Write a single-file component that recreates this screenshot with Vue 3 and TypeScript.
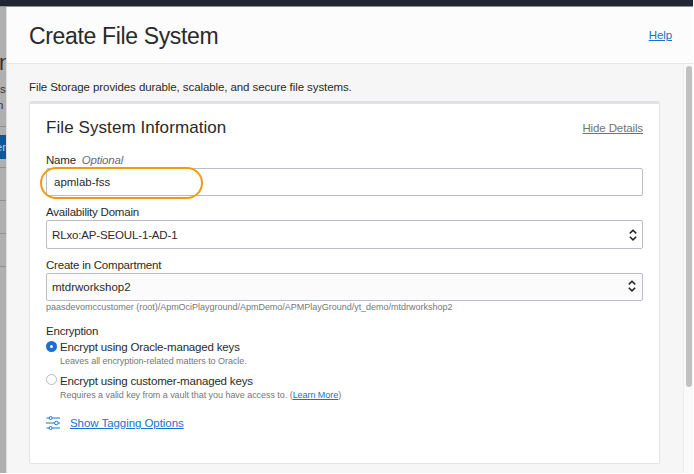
<script setup lang="ts">
import { ref } from 'vue'

const name = ref<string>('apmlab-fss')
const encryption = ref<'oracle' | 'customer'>('oracle')
</script>

<template>
  <div class="screen">
    <div class="topbar"></div>
    <div class="stage">
      <aside class="behind" aria-hidden="true">
        <div class="b-title">n</div>
        <div class="b-line">s</div>
        <div class="b-line b-second">n</div>
        <div class="b-head"><span class="b-button">er</span></div>
        <div class="b-row"></div>
        <div class="b-row"></div>
        <div class="b-row"></div>
      </aside>
      <section class="panel">
        <header class="header">
          <h1>Create File System</h1>
          <a class="help">Help</a>
        </header>
        <div class="body">
          <main class="content">
            <p class="intro">File Storage provides durable, scalable, and secure file systems.</p>
            <div class="card">
              <div class="card-head">
                <h2>File System Information</h2>
                <a class="hide">Hide Details</a>
              </div>
              <label class="label name-label"><span>Name</span><em>Optional</em></label>
              <div class="field name-field">
                <input v-model="name" aria-label="Name" />
                <span class="highlight"></span>
              </div>
              <label class="label next-label"><span>Availability Domain</span></label>
              <div class="field ad-field">
                <span class="ad-value">RLxo:AP-SEOUL-1-AD-1</span>
                <svg class="chev" viewBox="0 0 8 12"><path d="M.8 4.4 4 1.3 7.2 4.4M.8 7.8 4 10.9 7.2 7.8" /></svg>
              </div>
              <label class="label next-label"><span>Create in Compartment</span></label>
              <div class="field comp-field">
                <span>mtdrworkshop2</span>
                <svg class="chev" viewBox="0 0 8 12"><path d="M.8 4.4 4 1.3 7.2 4.4M.8 7.8 4 10.9 7.2 7.8" /></svg>
              </div>
              <p class="path">paasdevomccustomer (root)/ApmOciPlayground/ApmDemo/APMPlayGround/yt_demo/mtdrworkshop2</p>
              <p class="label enc-label"><span>Encryption</span></p>
              <div class="option" @click="encryption = 'oracle'">
                <span class="radio" :class="{ on: encryption === 'oracle' }"></span>
                <div>
                  <p class="opt-title">Encrypt using Oracle-managed keys</p>
                  <p class="opt-hint">Leaves all encryption-related matters to Oracle.</p>
                </div>
              </div>
              <div class="option" @click="encryption = 'customer'">
                <span class="radio" :class="{ on: encryption === 'customer' }"></span>
                <div>
                  <p class="opt-title">Encrypt using customer-managed keys</p>
                  <p class="opt-hint">Requires a valid key from a vault that you have access to. (<a>Learn More</a>)</p>
                </div>
              </div>
              <div class="tagging">
                <svg class="sliders" viewBox="0 0 14 14">
                  <path d="M0.5 2H3M6.4 2H14M0 7H8.4M12.4 7H14M0.5 12H3M6.4 12H14" />
                  <circle cx="4.7" cy="2" r="1.5" />
                  <circle cx="10.4" cy="7" r="1.8" />
                  <circle cx="4.7" cy="12" r="1.5" />
                </svg>
                <a class="tag-link">Show Tagging Options</a>
              </div>
            </div>
          </main>
          <div class="scroll"><div class="thumb"></div></div>
        </div>
      </section>
    </div>
  </div>
</template>

<style>
body {
  background: #fff;
  overflow: hidden;
}
</style>

<style scoped>
* {
  box-sizing: border-box;
}
.screen {
  width: 693px;
  height: 473px;
  overflow: hidden;
  display: flex;
  flex-direction: column;
  font-family: 'Liberation Sans', Arial, sans-serif;
  font-size: 11.5px;
  color: #2a2a2a;
}
h1, h2, p {
  margin: 0;
  font-weight: 400;
  white-space: nowrap;
}
span, a, em {
  white-space: nowrap;
}
a {
  color: #1872cf;
  text-decoration: underline;
  text-underline-offset: 1px;
  text-decoration-thickness: 1px;
}
.topbar {
  height: 6px;
  background: #1e2733;
  flex: none;
}
.stage {
  flex: 1;
  min-height: 0;
  display: flex;
  border-top: 1px solid #8e8f99;
}
.behind {
  width: 6px;
  flex: none;
  overflow: hidden;
  background: #b0b0b0;
  color: #333;
  display: flex;
  flex-direction: column;
}
.b-title {
  margin-top: 43px;
  margin-left: -1px;
  font-size: 22px;
  line-height: 26px;
}
.b-line {
  margin-top: 5px;
  line-height: 16px;
}
.b-second {
  margin-top: 0;
  margin-left: -3px;
}
.b-head {
  width: 6px;
  height: 42px;
  margin-top: 13px;
  border-top: 1px solid #8f8f8f;
  border-bottom: 1px solid #8f8f8f;
  display: flex;
  align-items: center;
}
.b-button {
  width: 6px;
  height: 24px;
  line-height: 24px;
  background: #11569d;
  color: #b6c8da;
  display: flex;
  justify-content: flex-end;
}
.b-row {
  width: 6px;
  height: 33px;
  border-bottom: 1px solid #8b919a;
}
.panel {
  flex: 1;
  min-width: 0;
  display: flex;
  flex-direction: column;
  background: #f6f6f6;
  border-left: 1px solid #dedede;
}
.header {
  height: 57px;
  flex: none;
  background: #fcfcfc;
  border-bottom: 1px solid #e6e6e6;
  display: flex;
  justify-content: space-between;
  padding: 0 21px 0 22px;
}
h1 {
  font-size: 23px;
  line-height: 58px;
  letter-spacing: -0.35px;
}
.help {
  line-height: 56px;
  letter-spacing: -0.1px;
}
.body {
  flex: 1;
  min-height: 0;
  display: flex;
}
.content {
  flex: 1;
  min-width: 0;
  padding: 15px 22px 0;
}
.intro {
  height: 22px;
  line-height: 17px;
  letter-spacing: -0.09px;
}
.card {
  width: 631px;
  height: 363px;
  background: #fff;
  border: 1px solid #e4e4e6;
  border-top: 3px solid #e1e1e6;
  border-radius: 2px;
  padding: 0 16px;
}
.card-head {
  display: flex;
  justify-content: space-between;
  height: 48px;
}
h2 {
  font-size: 17px;
  line-height: 48px;
  letter-spacing: 0.08px;
}
.hide {
  color: #737373;
  line-height: 48px;
  letter-spacing: -0.12px;
}
.label {
  display: flex;
  height: 16px;
  line-height: 16px;
  letter-spacing: -0.21px;
}
.label em {
  color: #6b6b6b;
  margin-left: 6px;
}
.field {
  height: 28px;
  border: 1px solid #b9bec7;
  border-radius: 2px;
  display: flex;
  align-items: center;
  justify-content: space-between;
  padding: 0 5px;
  position: relative;
}
.field input {
  flex: 1;
  min-width: 0;
  border: 0;
  outline: 0;
  background: transparent;
  padding: 0 0 0 2px;
  font: inherit;
  color: inherit;
}
.highlight {
  position: absolute;
  left: -7px;
  top: -2px;
  width: 163px;
  height: 32px;
  border: 2px solid #f5980f;
  border-radius: 16px;
}
.next-label {
  margin-top: 8px;
}
.ad-field {
  height: 29px;
}
.ad-value {
  letter-spacing: -0.15px;
}
.comp-field {
  background: #fbfbfb;
  padding-right: 6px;
}
.chev {
  width: 8px;
  height: 12px;
  fill: none;
  stroke: #222;
  stroke-width: 1.5;
}
.comp-field .chev {
  margin-bottom: 2px;
}
.path {
  height: 13px;
  line-height: 13px;
  font-size: 9px;
  letter-spacing: -0.015px;
  color: #777;
}
.enc-label {
  margin-top: 9px;
}
.option {
  display: flex;
  height: 34px;
  gap: 3px;
}
.radio {
  width: 11px;
  height: 11px;
  margin-top: 2px;
  border: 1px solid #b5bcc6;
  border-radius: 50%;
  background: #fff;
  flex: none;
}
.radio.on {
  border: 4px solid #1b70d0;
}
.option + .option .radio {
  margin-top: 1px;
}
.opt-title {
  line-height: 16px;
  letter-spacing: -0.17px;
}
.opt-hint {
  font-size: 9px;
  line-height: 13px;
  letter-spacing: -0.05px;
  color: #777;
}
.tagging {
  display: flex;
  align-items: center;
  gap: 10px;
  height: 16px;
  margin-top: 8px;
}
.tag-link {
  letter-spacing: -0.06px;
}
.sliders {
  width: 14px;
  height: 14px;
  fill: none;
  stroke: #1872cf;
  stroke-width: 1;
}
.scroll {
  width: 10px;
  flex: none;
  background: #fafafa;
  border-left: 1px solid #ededed;
  padding: 2px 1px 0;
}
.thumb {
  width: 6px;
  height: 321px;
  border-radius: 3px;
  background: #c1c1c1;
  margin-left: 1px;
}
</style>
